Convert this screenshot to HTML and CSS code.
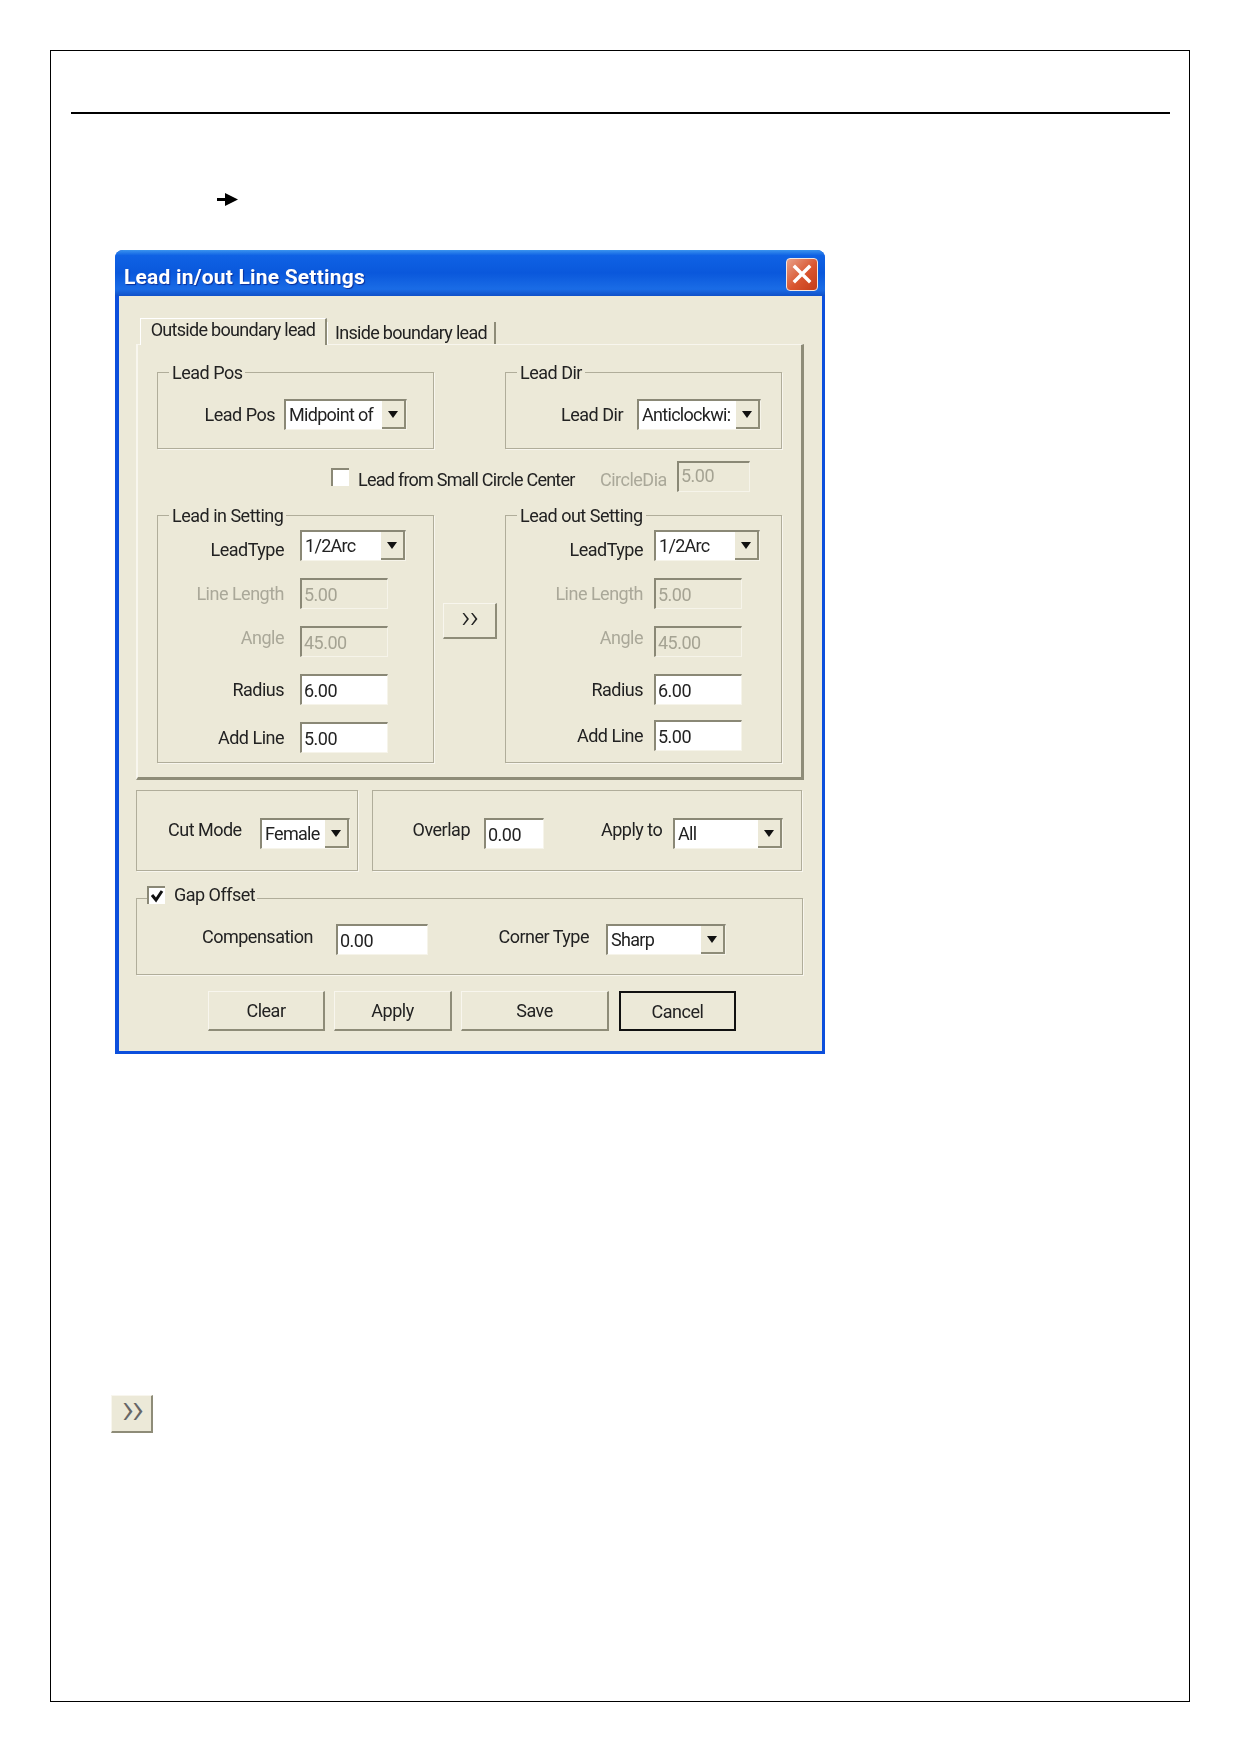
FILE: index.html
```html
<!DOCTYPE html>
<html lang="en">
<head>
    <meta charset="UTF-8">
    <meta name="viewport" content="width=device-width, initial-scale=1.0">
    <title>Lead in/out Line Settings</title>
    <link rel="stylesheet" href="styles.css">
</head>
<body>
    <div class="page">
        <div class="rule"></div>

        <svg class="arrow" width="21" height="13" viewBox="0 0 21 13">
            <path d="M0 5h9v3H0z" fill="#000"/>
            <path d="M8 0l13 6.5L8 13z" fill="#000"/>
        </svg>

        <div class="window">
            <div class="titlebar">
                <span class="title">Lead in/out Line Settings</span>
                <div class="close">
                    <svg width="20" height="20" viewBox="0 0 20 20">
                        <path d="M3 3l14 14M17 3L3 17" stroke="#fff" stroke-width="3.4" stroke-linecap="square"/>
                    </svg>
                </div>
            </div>

            <div class="client">
                <div class="tabs">
                    <div class="tab tab-active">Outside boundary lead</div>
                    <div class="tab">Inside boundary lead</div>
                </div>

                <div class="pane">
                    <div class="row-groups">
                        <div class="group group-pos">
                            <span class="legend">Lead Pos</span>
                            <div class="line line-pos">
                                <span class="label">Lead Pos</span>
                                <div class="field combo combo-pos"><span class="combo-text">Midpoint of</span><span class="combo-btn"></span></div>
                            </div>
                        </div>
                        <div class="group group-pos">
                            <span class="legend">Lead Dir</span>
                            <div class="line line-dir">
                                <span class="label">Lead Dir</span>
                                <div class="field combo combo-dir"><span class="combo-text">Anticlockwi:</span><span class="combo-btn"></span></div>
                            </div>
                        </div>
                    </div>

                    <div class="circle-row">
                        <span class="check"></span>
                        <span class="label check-label">Lead from Small Circle Center</span>
                        <span class="label off circle-label">CircleDia</span>
                        <div class="field off-field circle-field">5.00</div>
                    </div>

                    <div class="row-settings">
                        <div class="group group-setting grid-in">
                            <span class="legend">Lead in Setting</span>
                            <span class="label label-low">LeadType</span>
                            <div class="field combo combo-type"><span class="combo-text">1/2Arc</span><span class="combo-btn"></span></div>
                            <span class="label off">Line Length</span>
                            <div class="field off-field">5.00</div>
                            <span class="label off label-high">Angle</span>
                            <div class="field off-field">45.00</div>
                            <span class="label">Radius</span>
                            <div class="field">6.00</div>
                            <span class="label">Add Line</span>
                            <div class="field">5.00</div>
                        </div>

                        <div class="copy-col">
                            <div class="btn btn-copy">››</div>
                        </div>

                        <div class="group group-setting grid-out">
                            <span class="legend">Lead out Setting</span>
                            <span class="label label-low">LeadType</span>
                            <div class="field combo combo-type"><span class="combo-text">1/2Arc</span><span class="combo-btn"></span></div>
                            <span class="label off">Line Length</span>
                            <div class="field off-field">5.00</div>
                            <span class="label off label-high">Angle</span>
                            <div class="field off-field">45.00</div>
                            <span class="label">Radius</span>
                            <div class="field">6.00</div>
                            <span class="label shift-up">Add Line</span>
                            <div class="field shift-up">5.00</div>
                        </div>
                    </div>
                </div>

                <div class="row-mode">
                    <div class="group group-cut">
                        <span class="label cut-label">Cut Mode</span>
                        <div class="field combo combo-cut"><span class="combo-text">Female</span><span class="combo-btn"></span></div>
                    </div>
                    <div class="group group-overlap">
                        <span class="label overlap-label">Overlap</span>
                        <div class="field overlap-field">0.00</div>
                        <span class="label apply-label">Apply to</span>
                        <div class="field combo combo-apply"><span class="combo-text">All</span><span class="combo-btn"></span></div>
                    </div>
                </div>

                <div class="group group-gap">
                    <div class="gap-legend">
                        <span class="check check-on">
                            <svg width="14" height="14" viewBox="0 0 14 14">
                                <path d="M2 6l4 5 6-9" fill="none" stroke="#111" stroke-width="3"/>
                            </svg>
                        </span>
                        <span class="gap-text">Gap Offset</span>
                    </div>
                    <span class="label comp-label">Compensation</span>
                    <div class="field comp-field">0.00</div>
                    <span class="label corner-label">Corner Type</span>
                    <div class="field combo combo-corner"><span class="combo-text">Sharp</span><span class="combo-btn"></span></div>
                </div>

                <div class="actions">
                    <div class="btn btn-clear">Clear</div>
                    <div class="btn btn-apply">Apply</div>
                    <div class="btn btn-save">Save</div>
                    <div class="btn btn-cancel">Cancel</div>
                </div>
            </div>
        </div>

        <div class="btn btn-mini">››</div>
    </div>
</body>
</html>
```

FILE: styles.css
```css
body {
    margin: 0;
    background-color: white;
    font-family: Roboto, "Liberation Sans", sans-serif;
    font-size: 18px;
    letter-spacing: -0.5px;
    color: #222;
}
.page {
    box-sizing: border-box;
    width: 1140px;
    height: 1652px;
    margin: 50px 0 0 50px;
    border: 1px solid #000;
    overflow: hidden;
}
.rule {
    width: 1099px;
    height: 2px;
    margin: 61px 0 0 20px;
    background-color: #000;
}
.arrow {
    display: block;
    margin: 79px 0 0 166px;
}

/* dialog window */
.window {
    box-sizing: border-box;
    width: 710px;
    height: 804px;
    margin: 44px 0 0 64px;
    background-color: #0c4fdc;
    border-radius: 8px 8px 0 0;
    padding: 0 3px 3px 4px;
    overflow: hidden;
    filter: blur(0.35px);
}
.titlebar {
    display: flex;
    align-items: center;
    justify-content: space-between;
    height: 46px;
    margin: 0 -3px 0 -4px;
    padding: 0 7px 0 9px;
    background: linear-gradient(to bottom, #3a93ee 0, #0f62e4 12%, #0a58dc 50%, #1a6ce6 85%, #0f50c8 100%);
}
.title {
    padding-top: 7px;
    font-size: 21px;
    font-weight: bold;
    letter-spacing: 0.2px;
    color: white;
    text-shadow: 1px 1px 1px #0a2f9a;
}
.close {
    display: flex;
    align-items: center;
    justify-content: center;
    box-sizing: border-box;
    width: 32px;
    height: 33px;
    margin-top: 2px;
    background: linear-gradient(135deg, #e8a088, #d9552f 55%, #c43c18);
    border: 1px solid #f2e6e0;
    border-radius: 4px;
}
.client {
    height: 755px;
    padding: 21px 0 0 17px;
    background-color: #ece9d8;
    box-sizing: border-box;
}

/* tabs */
.tabs {
    display: flex;
    align-items: flex-end;
    height: 27px;
    padding-left: 4px;
}
.tab {
    box-sizing: border-box;
    height: 22px;
    padding: 0 6px;
    border-left: 1px solid #fff;
    border-right: 2px solid #8e8c78;
    line-height: 22px;
    letter-spacing: -0.7px;
    white-space: nowrap;
    width: 169px;
    text-align: center;
}
.tab-active {
    position: relative;
    width: 187px;
    height: 27px;
    line-height: 21px;
    border-top: 1px solid #fff;
    margin-bottom: -1px;
    background-color: #ece9d8;
}
.pane {
    box-sizing: border-box;
    width: 668px;
    height: 436px;
    padding: 27px 0 0 19px;
    border-top: 1px solid #f8f6ee;
    border-left: 2px solid #f8f6ee;
    border-right: 3px solid #8e8c78;
    border-bottom: 3px solid #8e8c78;
}

/* group boxes */
.group {
    position: relative;
    box-sizing: border-box;
    border: 1px solid #b0ad9a;
    box-shadow: 1px 1px 0 #f8f6ee;
}
.legend {
    position: absolute;
    top: -11px;
    left: 11px;
    padding: 0 3px;
    line-height: 22px;
    background-color: #ece9d8;
    white-space: nowrap;
}
.label {
    white-space: nowrap;
    text-align: right;
}
.off {
    color: #aaa899;
}
.field {
    box-sizing: border-box;
    height: 31px;
    padding: 3px 0 0 2px;
    line-height: 24px;
    background-color: white;
    border-top: 2px solid #8a8876;
    border-left: 2px solid #8a8876;
    border-right: 1px solid #f6f4ea;
    border-bottom: 1px solid #f6f4ea;
}
.off-field {
    background-color: #ece9d8;
    color: #a5a393;
}
.combo {
    display: flex;
    justify-content: space-between;
    padding: 0 0 0 3px;
    line-height: 27px;
}
.combo-text {
    white-space: nowrap;
    letter-spacing: -0.7px;
}
.combo-btn {
    position: relative;
    flex: none;
    width: 24px;
    background-color: #ece9d8;
    border-right: 2px solid #8e8c78;
    border-bottom: 2px solid #8e8c78;
    box-sizing: border-box;
}
.combo-btn::after {
    content: "";
    position: absolute;
    top: 10px;
    left: 6px;
    border-top: 7px solid #111;
    border-left: 5px solid transparent;
    border-right: 5px solid transparent;
}
.btn {
    box-sizing: border-box;
    display: flex;
    align-items: center;
    justify-content: center;
    background-color: #ece9d8;
    border-top: 1px solid #f8f6ee;
    border-left: 1px solid #f8f6ee;
    border-right: 2px solid #8e8c78;
    border-bottom: 2px solid #8e8c78;
}

/* top row of the pane */
.row-groups {
    display: flex;
    gap: 71px;
}
.group-pos {
    width: 277px;
    height: 77px;
    padding-top: 26px;
}
.line {
    display: flex;
    align-items: center;
}
.line-pos {
    justify-content: flex-end;
    gap: 9px;
    padding-right: 26px;
}
.line-dir {
    justify-content: flex-end;
    gap: 14px;
    padding-right: 20px;
}
.combo-pos {
    width: 123px;
}
.combo-dir {
    width: 124px;
}

/* small circle row */
.circle-row {
    display: flex;
    align-items: center;
    height: 31px;
    margin-top: 12px;
    padding-left: 174px;
}
.check {
    box-sizing: border-box;
    display: flex;
    align-items: center;
    justify-content: center;
    flex: none;
    width: 18px;
    height: 18px;
    background-color: white;
    border-top: 2px solid #8a8876;
    border-left: 2px solid #8a8876;
}
.check-label {
    width: 216px;
    margin: 5px 0 0 9px;
    letter-spacing: -0.75px;
    text-align: left;
}
.circle-label {
    width: 66px;
    margin: 5px 0 0 26px;
    text-align: left;
}
.circle-field {
    width: 73px;
    margin: -1px 0 0 11px;
    padding-top: 1px;
}

/* lead in / lead out */
.row-settings {
    display: flex;
    margin-top: 23px;
}
.group-setting {
    display: grid;
    grid-auto-rows: 31px;
    row-gap: 17px;
    width: 277px;
    height: 248px;
    padding-top: 14px;
    align-items: center;
}
.grid-in {
    grid-template-columns: 126px 88px;
    column-gap: 16px;
}
.grid-out {
    grid-template-columns: 137px 88px;
    column-gap: 11px;
}
.combo-type {
    width: 106px;
}
.label-low {
    margin-top: 8px;
}
.label-high {
    margin-top: -8px;
}
.shift-up {
    margin-top: -5px;
}
.copy-col {
    width: 71px;
    padding: 88px 0 0 9px;
    box-sizing: border-box;
}
.btn-copy {
    width: 54px;
    height: 36px;
    font-size: 32px;
    font-weight: 300;
    letter-spacing: -1px;
    padding-bottom: 7px;
}

/* cut mode and overlap */
.row-mode {
    display: flex;
    gap: 14px;
    margin-top: 10px;
}
.group-cut,
.group-overlap {
    display: flex;
    height: 81px;
    padding-top: 27px;
}
.group-cut {
    width: 222px;
}
.group-overlap {
    width: 430px;
}
.cut-label {
    width: 72px;
    margin-left: 31px;
}
.combo-cut {
    width: 90px;
    margin-left: 20px;
}
.overlap-label {
    width: 59px;
    margin-left: 38px;
}
.overlap-field {
    width: 60px;
    margin-left: 14px;
}
.apply-label {
    width: 61px;
    margin-left: 57px;
}
.combo-apply {
    width: 110px;
    margin-left: 11px;
}
.group-cut .label,
.group-overlap .label {
    line-height: 24px;
}

/* gap offset */
.group-gap {
    display: flex;
    width: 667px;
    height: 77px;
    margin-top: 27px;
    padding-top: 25px;
}
.gap-legend {
    position: absolute;
    top: -18px;
    left: 10px;
    display: flex;
    align-items: center;
    gap: 9px;
    padding-right: 2px;
    background-color: #ece9d8;
}
.gap-text {
    line-height: 28px;
}
.comp-label {
    width: 106px;
    margin-left: 65px;
    line-height: 26px;
}
.comp-field {
    width: 92px;
    margin-left: 28px;
}
.corner-label {
    width: 92px;
    margin-left: 69px;
    line-height: 26px;
}
.combo-corner {
    width: 120px;
    margin-left: 17px;
}

/* bottom buttons */
.actions {
    display: flex;
    gap: 9px;
    margin: 16px 0 0 72px;
}
.actions .btn {
    height: 40px;
}
.btn-clear,
.btn-cancel {
    width: 117px;
}
.btn-apply {
    width: 118px;
}
.btn-save {
    width: 148px;
}
.actions .btn-cancel {
    margin-left: 1px;
    border: 2px solid #111;
}
.btn-mini {
    width: 42px;
    height: 38px;
    margin: 341px 0 0 60px;
    color: #666;
    font-size: 44px;
    font-weight: 300;
    letter-spacing: -3px;
    padding-bottom: 10px;
}
```
